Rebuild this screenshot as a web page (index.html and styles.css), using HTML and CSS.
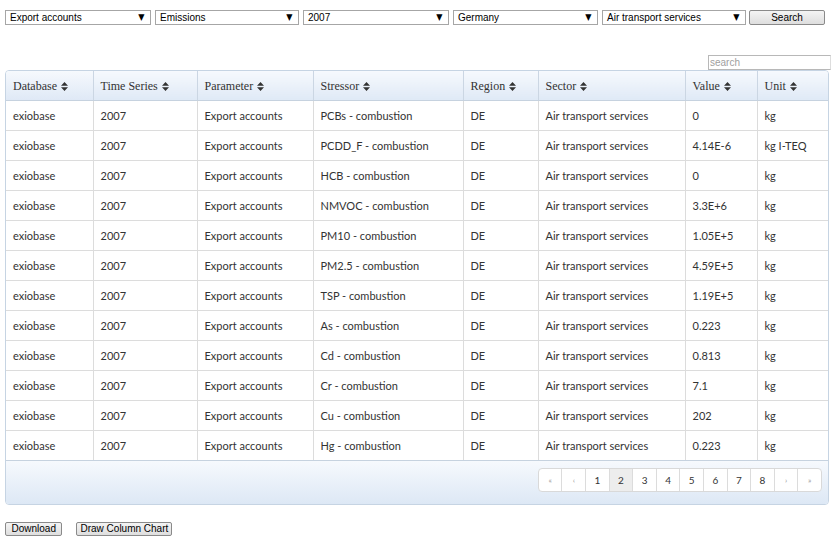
FILE: index.html
```html
<!DOCTYPE html>
<html>
<head>
<meta charset="utf-8">
<link rel="stylesheet" href="styles.css">
</head>
<body>
<div class="topbar">
  <div class="sel w146">Export accounts<span class="arr">▼</span></div>
  <div class="sel w144">Emissions<span class="arr">▼</span></div>
  <div class="sel w146">2007<span class="arr">▼</span></div>
  <div class="sel w145">Germany<span class="arr">▼</span></div>
  <div class="sel w144">Air transport services<span class="arr">▼</span></div>
  <button class="btn search-btn">Search</button>
</div>
<div class="filter-row"><input class="search" placeholder="search"></div>
<div class="grid">
  <table>
    <colgroup>
      <col style="width:87px"><col style="width:104px"><col style="width:116px"><col style="width:150px"><col style="width:75px"><col style="width:147px"><col style="width:72px"><col style="width:71px">
    </colgroup>
    <thead>
      <tr>
        <th>Database <svg class="sort" viewBox="0 0 7 9"><path d="M3.5 0L7 3.8H0Z M3.5 9L7 5.2H0Z"/></svg></th>
        <th>Time Series <svg class="sort" viewBox="0 0 7 9"><path d="M3.5 0L7 3.8H0Z M3.5 9L7 5.2H0Z"/></svg></th>
        <th>Parameter <svg class="sort" viewBox="0 0 7 9"><path d="M3.5 0L7 3.8H0Z M3.5 9L7 5.2H0Z"/></svg></th>
        <th>Stressor <svg class="sort" viewBox="0 0 7 9"><path d="M3.5 0L7 3.8H0Z M3.5 9L7 5.2H0Z"/></svg></th>
        <th>Region <svg class="sort" viewBox="0 0 7 9"><path d="M3.5 0L7 3.8H0Z M3.5 9L7 5.2H0Z"/></svg></th>
        <th>Sector <svg class="sort" viewBox="0 0 7 9"><path d="M3.5 0L7 3.8H0Z M3.5 9L7 5.2H0Z"/></svg></th>
        <th>Value <svg class="sort" viewBox="0 0 7 9"><path d="M3.5 0L7 3.8H0Z M3.5 9L7 5.2H0Z"/></svg></th>
        <th>Unit <svg class="sort" viewBox="0 0 7 9"><path d="M3.5 0L7 3.8H0Z M3.5 9L7 5.2H0Z"/></svg></th>
      </tr>
    </thead>
    <tbody>
      <tr><td>exiobase</td><td>2007</td><td>Export accounts</td><td>PCBs - combustion</td><td>DE</td><td>Air transport services</td><td>0</td><td>kg</td></tr>
      <tr><td>exiobase</td><td>2007</td><td>Export accounts</td><td>PCDD_F - combustion</td><td>DE</td><td>Air transport services</td><td>4.14E-6</td><td>kg I-TEQ</td></tr>
      <tr><td>exiobase</td><td>2007</td><td>Export accounts</td><td>HCB - combustion</td><td>DE</td><td>Air transport services</td><td>0</td><td>kg</td></tr>
      <tr><td>exiobase</td><td>2007</td><td>Export accounts</td><td>NMVOC - combustion</td><td>DE</td><td>Air transport services</td><td>3.3E+6</td><td>kg</td></tr>
      <tr><td>exiobase</td><td>2007</td><td>Export accounts</td><td>PM10 - combustion</td><td>DE</td><td>Air transport services</td><td>1.05E+5</td><td>kg</td></tr>
      <tr><td>exiobase</td><td>2007</td><td>Export accounts</td><td>PM2.5 - combustion</td><td>DE</td><td>Air transport services</td><td>4.59E+5</td><td>kg</td></tr>
      <tr><td>exiobase</td><td>2007</td><td>Export accounts</td><td>TSP - combustion</td><td>DE</td><td>Air transport services</td><td>1.19E+5</td><td>kg</td></tr>
      <tr><td>exiobase</td><td>2007</td><td>Export accounts</td><td>As - combustion</td><td>DE</td><td>Air transport services</td><td>0.223</td><td>kg</td></tr>
      <tr><td>exiobase</td><td>2007</td><td>Export accounts</td><td>Cd - combustion</td><td>DE</td><td>Air transport services</td><td>0.813</td><td>kg</td></tr>
      <tr><td>exiobase</td><td>2007</td><td>Export accounts</td><td>Cr - combustion</td><td>DE</td><td>Air transport services</td><td>7.1</td><td>kg</td></tr>
      <tr><td>exiobase</td><td>2007</td><td>Export accounts</td><td>Cu - combustion</td><td>DE</td><td>Air transport services</td><td>202</td><td>kg</td></tr>
      <tr><td>exiobase</td><td>2007</td><td>Export accounts</td><td>Hg - combustion</td><td>DE</td><td>Air transport services</td><td>0.223</td><td>kg</td></tr>
    </tbody>
  </table>
  <div class="footer">
    <div class="pager">
      <span class="pg dim">&laquo;</span><span class="pg dim">&lsaquo;</span><span class="pg">1</span><span class="pg active">2</span><span class="pg">3</span><span class="pg">4</span><span class="pg">5</span><span class="pg">6</span><span class="pg">7</span><span class="pg">8</span><span class="pg dim">&rsaquo;</span><span class="pg dim">&raquo;</span>
    </div>
  </div>
</div>
<div class="actions">
  <button class="btn dl">Download</button>
  <button class="btn">Draw Column Chart</button>
</div>
</body>
</html>
```

FILE: styles.css
```css
* { box-sizing: border-box; }
html, body { margin: 0; padding: 0; background: #fff; }
body { padding: 10px 5px 0 5px; font-family: "Liberation Sans", Arial, sans-serif; width: 835px; }

.topbar { display: flex; gap: 4px; height: 15px; }
.sel {
  position: relative;
  height: 15px;
  border: 1px solid #a6a6a6;
  font-size: 10px;
  line-height: 13px;
  padding-left: 4px;
  color: #000;
  background: #fff;
}
.w146 { width: 146px; }
.w144 { width: 144px; }
.w145 { width: 145px; }
.arr { position: absolute; right: 5px; top: 0; font-size: 9px; line-height: 13px; font-family: "DejaVu Sans", sans-serif; transform: scaleX(0.9); }
.btn {
  font-family: "Liberation Sans", Arial, sans-serif;
  font-size: 10px;
  height: 15px;
  line-height: 12px;
  padding: 0 4px;
  border: 1px solid #8a8a8a;
  border-radius: 2px;
  background: linear-gradient(#f4f4f4, #dedede);
  color: #000;
}
.search-btn { width: 76px; margin-left: -1px; }

.filter-row { display: flex; justify-content: flex-end; margin-top: 30px; margin-right: -1px; }
.search {
  width: 123px; height: 15px;
  border: 1px solid #b8b8b8;
  border-right-color: #ddd;
  font-size: 10px;
  padding: 0 1px;
  font-family: "Liberation Sans", Arial, sans-serif;
  outline: none;
}
.search::placeholder { color: #a0a0a0; }

.grid {
  width: 824px;
  border: 1px solid #c6d4e3;
  border-radius: 4px;
  overflow: hidden;
}
table { border-collapse: collapse; table-layout: fixed; width: 822px; }
th {
  height: 29px;
  text-align: left;
  font-family: "Liberation Serif", "DejaVu Serif", serif;
  font-weight: normal;
  font-size: 12px;
  color: #333;
  padding: 2px 0 0 7px;
  background: linear-gradient(#f6f9fd, #dfe9f6);
  border-left: 1px solid #cbd6e3;
  border-bottom: 1px solid #c6d2df;
  white-space: nowrap;
}
th:first-child, td:first-child { border-left: none; }
.sort { width: 7px; height: 9px; vertical-align: -1px; margin-left: 1px; fill: #333; }
td {
  height: 30px;
  font-family: Lato, "Open Sans", sans-serif;
  font-size: 11px;
  color: #333;
  padding: 0 0 0 7px;
  border-left: 1px solid #dcdcdc;
  border-bottom: 1px solid #dcdcdc;
  white-space: nowrap;
  overflow: hidden;
}
tbody tr:last-child td { border-bottom: 1px solid #c6d2df; }
.footer {
  height: 43px;
  background: linear-gradient(#f6f9fd, #dde8f5);
  display: flex;
  justify-content: flex-end;
  align-items: flex-start;
  padding: 7px 6px 0 0;
}
.pager {
  display: flex;
  border: 1px solid #d9d9d9;
  border-radius: 4px;
  background: #fff;
  overflow: hidden;
}
.pg {
  width: 23.6px; height: 22px;
  display: flex; align-items: center; justify-content: center;
  font-family: Lato, "Open Sans", sans-serif;
  font-size: 10px;
  color: #333;
  border-left: 1px solid #dcdcdc;
}
.pg:first-child { border-left: none; width: 22.6px; }
.pg.dim { color: #999; font-size: 8px; }
.pg.active { background: #ededed; }

.actions { display: flex; gap: 14px; margin-top: 17px; }
.actions .btn { height: 14px; padding: 0 3px; }
.actions .btn.dl { padding: 0 5.5px; }
```
